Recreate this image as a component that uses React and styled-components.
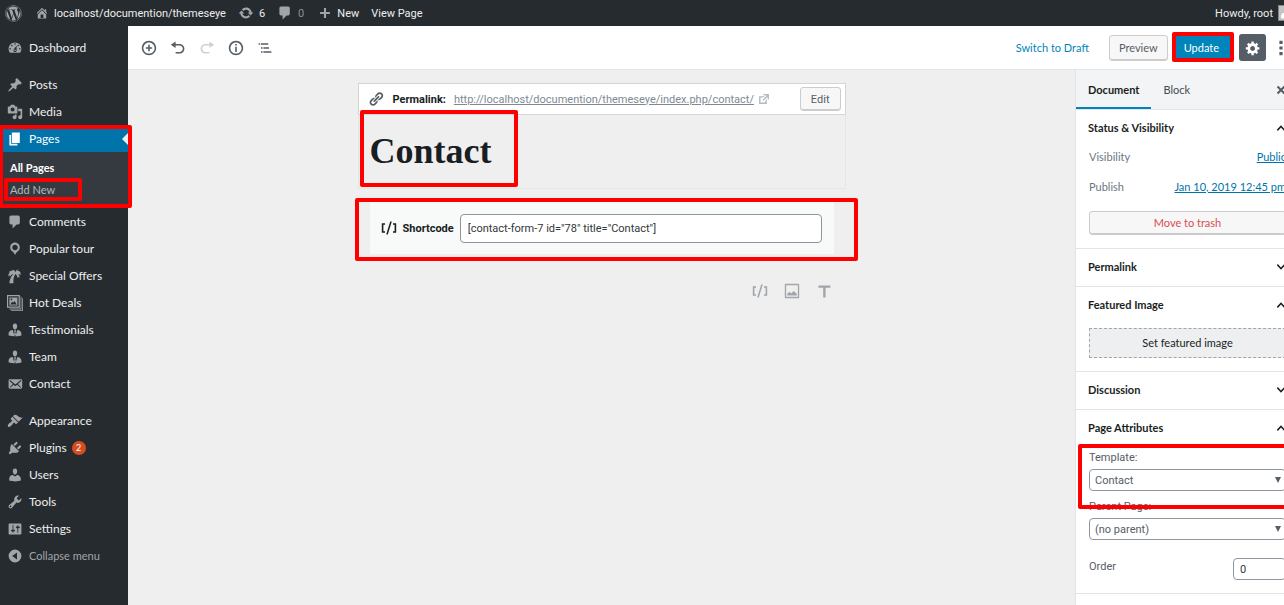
import React from "react";
import styled, { createGlobalStyle, css } from "styled-components";
import { FaWordpress } from "react-icons/fa";

const ui = `Lato, "Open Sans", sans-serif`;
const body = `Roboto, "Open Sans", sans-serif`;

const GlobalStyle = createGlobalStyle`
  * {
    box-sizing: border-box;
  }
  body {
    margin: 0;
    background: #efefef;
    color: #191e23;
    font-family: ${body};
    font-size: 11px;
  }
  button, input, select {
    font: inherit;
    color: inherit;
    margin: 0;
  }
  a {
    color: inherit;
    text-decoration: none;
  }
`;

const paths = {
  dashboard:
    "M3.76 16h12.48c1.1-1.37 1.76-3.11 1.76-5 0-4.42-3.58-8-8-8s-8 3.58-8 8c0 1.89.66 3.63 1.76 5zM10 4c.55 0 1 .45 1 1s-.45 1-1 1-1-.45-1-1 .45-1 1-1zM6 6c.55 0 1 .45 1 1s-.45 1-1 1-1-.45-1-1 .45-1 1-1zm8 0c.55 0 1 .45 1 1s-.45 1-1 1-1-.45-1-1 .45-1 1-1zm-5.37 5.55L12 7v6c0 1.1-.9 2-2 2s-2-.9-2-2c0-.57.24-1.08.63-1.45zM4 10c.55 0 1 .45 1 1s-.45 1-1 1-1-.45-1-1 .45-1 1-1zm12 0c.55 0 1 .45 1 1s-.45 1-1 1-1-.45-1-1 .45-1 1-1zm-5 3c0-.55-.45-1-1-1s-1 .45-1 1 .45 1 1 1 1-.45 1-1z",
  post: "M10.44 3.02l1.82-1.82 6.36 6.35-1.83 1.82c-1.05-.68-2.48-.57-3.41.36l-.75.75c-.92.93-1.04 2.35-.35 3.41l-1.83 1.82-2.41-2.41-2.8 2.79c-.42.42-3.38 2.71-3.8 2.29s1.86-3.39 2.28-3.81l2.79-2.79L4.1 9.36l1.83-1.82c1.05.69 2.48.57 3.4-.36l.75-.75c.93-.92 1.05-2.35.36-3.41z",
  media:
    "M13 11V4c0-.55-.45-1-1-1h-1.67L9 1H5L3.67 3H2c-.55 0-1 .45-1 1v7c0 .55.45 1 1 1h10c.55 0 1-.45 1-1zM7 4.5c1.38 0 2.5 1.12 2.5 2.5S8.38 9.5 7 9.5 4.5 8.38 4.5 7 5.62 4.5 7 4.5zM14 6h5v10.5c0 1.38-1.12 2.5-2.5 2.5S14 17.88 14 16.5s1.12-2.5 2.5-2.5c.17 0 .34.02.5.05V9h-3V6zm-4 8.05V13h2v3.5c0 1.38-1.12 2.5-2.5 2.5S7 17.88 7 16.5 8.12 14 9.5 14c.17 0 .34.02.5.05z",
  page: "M6 15V2h10v13H6zm-1 1h8v2H3V5h2v11z",
  comment:
    "M5 2h9c1.1 0 2 .9 2 2v7c0 1.1-.9 2-2 2h-2l-5 5v-5H5c-1.1 0-2-.9-2-2V4c0-1.1.9-2 2-2z",
  location:
    "M10 2C6.69 2 4 4.69 4 8c0 2.02 1.17 3.71 2.53 4.89.43.37 1.18.96 1.85 1.83.74.97 1.41 2.01 1.62 2.71.21-.7.88-1.74 1.62-2.71.67-.87 1.42-1.46 1.85-1.83C14.83 11.71 16 10.02 16 8c0-3.31-2.69-6-6-6zm0 2.56c1.9 0 3.44 1.54 3.44 3.44S11.9 11.44 10 11.44 6.56 9.9 6.56 8 8.1 4.56 10 4.56z",
  palm: "M10.6 5.6C10.3 3.6 8.6 2.1 6.3 2.3l1.2 1.3C5.300 3 3 3.800 2.200 5.600l1.900-.2C2.300 6.400 1.300 8.400 1.900 10.500l1.500-1.600-.1 2.300c1.200-2 3-3.500 5-4.100C5.500 9.700 3.300 13.500 2.900 19h5.200c-.5-4.200.4-8.300 2.300-11.400 1.600 1 2.700 2.900 2.900 5.200l1-1.900.9 2c.7-1.900.2-4-1.300-5.300l2 .2.2 1.800c1.200-1.400 1.300-3.100.3-4.600-1.100-1.300-2.800-1.700-4.400-1.200l2.300-1.600C13.100 1.500 11.100 3 10.600 5.600z",
  gallery:
    "M0 0h16v16H0V0zm1.500 1.500v13h13v-13h-13zM3 3h10v10H3V3zm1 9h8L9.500 7.500 8 9.500 6.500 8.500 4 12zM4.500 4.500v2h2v-2zM17 2h1v16H3v-1h14V2zm2 2h1v16H5v-1h14V4z",
  businessman:
    "M10 9.250c-2.270 0-2.730-3.440-2.730-3.440C7 4.020 7.820 2 9.970 2c2.160 0 2.980 2.020 2.710 3.810 0 0-.41 3.440-2.680 3.440zM7.200 10.100l2.200 7.900c-3.500 0-7.400-1-7.400-1v-2.500c0-2.200 1.900-4.300 5.200-4.400zm5.600 0c3.200.1 5.200 2.300 5.200 4.400V17s-3.900 1-7.400 1l2.200-7.900zM9.200 10.400h1.600l.5 1-.8 1.200.7 3.400-1.200 1.500L8.800 16l.7-3.400-.8-1.200z",
  email:
    "M19 14.500v-9c0-.83-.67-1.500-1.500-1.500H3.490c-.83 0-1.500.67-1.500 1.500v9c0 .83.67 1.500 1.500 1.500H17.500c.83 0 1.500-.67 1.500-1.500zm-1.310-9.110c.33.33.15.67-.03.84L13.600 9.950l3.900 4.060c.12.14.2.36.06.51-.13.16-.43.15-.56.05l-4.370-3.730-2.140 1.950-2.130-1.950-4.370 3.730c-.13.1-.43.11-.56-.05-.14-.15-.06-.37.06-.51l3.900-4.060-4.060-3.720c-.18-.17-.36-.51-.03-.84s.67-.17.95.07l6.240 5.040 6.250-5.040c.28-.24.62-.4.95-.07z",
  appearance:
    "M14.480 11.060L7.410 3.990l1.500-1.500c.5-.56 2.300-.47 3.510.32 1.210.8 1.430 1.280 2.910 2.100 1.180.64 2.450 1.260 4.450.85zm-.71.71L6.700 4.700 4.930 6.470c-.39.39-.39 1.020 0 1.410l1.060 1.060c.39.39.39 1.030 0 1.420-.6.6-1.430 1.110-2.210 1.690-.35.26-.7.53-1.010.84C1.430 14.230.4 16.080 1.400 17.070c.99 1 2.840-.03 4.180-1.360.31-.31.58-.66.85-1.020.57-.78 1.080-1.610 1.690-2.210.39-.39 1.020-.39 1.410 0l1.060 1.060c.39.39 1.020.39 1.410 0z",
  plugins:
    "M13.110 4.360L9.870 7.600 8 5.730l3.240-3.240c.35-.34 1.050-.2 1.560.32.52.51.66 1.210.31 1.550zm-8 1.770l.91-1.120 9.010 9.010-1.190.84c-.71.71-2.630 1.160-3.820 1.160H6.140L4.900 17.260c-.59.59-1.540.59-2.120 0-.59-.58-.59-1.530 0-2.120l1.240-1.240v-3.880c0-1.130.4-3.190 1.090-3.890zm7.260 3.970l3.240-3.240c.34-.35 1.040-.21 1.550.31.52.51.66 1.210.31 1.550l-3.240 3.250z",
  users:
    "M10 9.250c-2.270 0-2.730-3.440-2.730-3.440C7 4.020 7.820 2 9.970 2c2.160 0 2.980 2.020 2.710 3.810 0 0-.41 3.440-2.680 3.440zm0 2.570L12.720 10c2.390 0 4.520 2.330 4.520 4.530v2.490s-3.650 1.130-7.240 1.130c-3.650 0-7.240-1.130-7.240-1.130v-2.490c0-2.250 1.940-4.480 4.470-4.480z",
  tools:
    "M16.680 9.770c-1.340 1.340-3.300 1.670-4.950.99l-5.410 6.520c-.99.99-2.590.99-3.580 0s-.99-2.590 0-3.570l6.520-5.420c-.68-1.650-.35-3.610.99-4.950 1.280-1.280 3.120-1.620 4.720-1.060l-2.890 2.890 2.820 2.820 2.860-2.870c.53 1.580.18 3.390-1.080 4.650zM3.810 16.210c.4.39 1.040.39 1.430 0 .4-.4.4-1.040 0-1.430-.39-.4-1.030-.4-1.430 0-.39.39-.39 1.030 0 1.430z",
  settings:
    "M18 16V4c0-.55-.45-1-1-1H3c-.55 0-1 .45-1 1v12c0 .55.45 1 1 1h14c.55 0 1-.45 1-1zM8 11h1c.55 0 1 .45 1 1s-.45 1-1 1H8v1.500c0 .28-.22.5-.5.5s-.5-.22-.5-.5V13H6c-.55 0-1-.45-1-1s.45-1 1-1h1V5.500c0-.28.22-.5.5-.5s.5.22.5.5V11zm5-2h-1c-.55 0-1-.45-1-1s.45-1 1-1h1V5.500c0-.28.22-.5.5-.5s.5.22.5.5V7h1c.55 0 1 .45 1 1s-.45 1-1 1h-1v5.500c0 .28-.22.5-.5.5s-.5-.22-.5-.5V9z",
  collapse:
    "M10 2a8 8 0 1 0 0 16a8 8 0 0 0 0-16zM12.500 5.500v9L6.500 10z",
  home: "M16 8.500l1.530 1.530-1.060 1.060L10 4.600l-6.470 6.490-1.060-1.060L10 2.500l4 4v-2h2v4zm-6-2.460l6 5.990V18H4v-5.970zM12 17v-5H8v5h4z",
  update:
    "M10.200 3.280c3.530 0 6.430 2.610 6.920 6h2.080l-3.500 4-3.500-4h2.320c-.45-1.970-2.210-3.450-4.320-3.450-1.450 0-2.730.71-3.540 1.780L4.950 5.660C6.230 4.200 8.110 3.280 10.200 3.280zm-.4 13.440c-3.520 0-6.430-2.610-6.920-6H.8l3.500-4c1.170 1.330 2.330 2.670 3.500 4H5.480c.45 1.970 2.210 3.450 4.320 3.450 1.450 0 2.730-.71 3.540-1.780l1.710 1.950c-1.280 1.460-3.150 2.380-5.250 2.380z",
  plus: "M8.500 3h3v5.500H17v3h-5.500V17h-3v-5.500H3v-3h5.500z",
  insert:
    "M10 1c-5 0-9 4-9 9s4 9 9 9 9-4 9-9-4-9-9-9zm0 16c-3.900 0-7-3.100-7-7s3.100-7 7-7 7 3.100 7 7-3.100 7-7 7zm1-11H9v3H6v2h3v3h2v-3h3V9h-3V6z",
  undo: "M12 5H7V2L1 6l6 4V7h5c2.200 0 4 1.800 4 4s-1.800 4-4 4H7v2h5c3.300 0 6-2.700 6-6s-2.700-6-6-6z",
  redo: "M8 5h5V2l6 4-6 4V7H8c-2.200 0-4 1.800-4 4s1.800 4 4 4h5v2H8c-3.300 0-6-2.700-6-6s2.700-6 6-6z",
  info: "M10 1c-5 0-9 4-9 9s4 9 9 9 9-4 9-9-4-9-9-9zm0 16c-3.900 0-7-3.100-7-7s3.100-7 7-7 7 3.100 7 7-3.100 7-7 7zM9 5h2v2H9zM9 8.500h2V15H9z",
  outline: "M2 4h2v2H2zM5 4h9v2H5zM5 9h2v2H5zM8 9h7v2H8zM5 14h2v2H5zM8 14h10v2H8z",
  gear: "M18 12h-2.180c-.17.7-.44 1.350-.81 1.930l1.540 1.540-2.100 2.100-1.540-1.540c-.58.36-1.230.63-1.910.79V19H8v-2.180c-.68-.16-1.330-.43-1.910-.79l-1.540 1.540-2.120-2.120 1.540-1.540c-.36-.58-.63-1.230-.79-1.910H1V9.030h2.170c.16-.7.44-1.350.8-1.940L2.430 5.550l2.100-2.100 1.540 1.540c.58-.37 1.240-.64 1.930-.81V2h3v2.180c.68.16 1.330.43 1.910.79l1.540-1.540 2.120 2.120-1.540 1.540c.36.59.64 1.240.8 1.940H18V12zm-8.500 1.500c1.660 0 3-1.340 3-3s-1.340-3-3-3-3 1.340-3 3 1.340 3 3 3z",
  dots: "M8 1h4v4H8zM8 8h4v4H8zM8 15h4v4H8z",
  link: "M17.740 2.760c1.680 1.690 1.680 4.410 0 6.100l-1.530 1.520c-1.120 1.120-2.700 1.470-4.140 1.090l2.620-2.610.76-.77.76-.76c.84-.84.84-2.200 0-3.040-.84-.85-2.200-.85-3.040 0l-.77.76-3.380 3.380c-.37-1.440-.02-3.020 1.100-4.140l1.520-1.530c1.690-1.680 4.420-1.680 6.100 0zM8.590 13.430l5.340-5.340c.42-.42.42-1.100 0-1.520-.44-.43-1.130-.39-1.530 0l-5.330 5.340c-.42.42-.42 1.100 0 1.520.44.43 1.130.39 1.520 0zm-.76 2.290l4.140-4.150c.38 1.440.03 3.020-1.090 4.140l-1.520 1.530c-1.690 1.680-4.410 1.680-6.100 0-1.680-1.680-1.680-4.420 0-6.100l1.530-1.520c1.120-1.120 2.700-1.470 4.140-1.100l-4.140 4.150c-.85.84-.85 2.200 0 3.050.84.84 2.200.84 3.040 0z",
  external:
    "M9 3h8v8l-2-1V6.920l-5.600 5.590-1.410-1.410L14.080 5H10zm3 12v-3l2-2v7H3V6h8L9 8H5v7h7z",
  close: "M3 5.400L5.400 3 10 7.600 14.600 3 17 5.400 12.400 10l4.600 4.600-2.400 2.400-4.600-4.600L5.400 17 3 14.600 7.600 10z",
  up: "M3 13l7-7.500 7 7.500-1.800 1.800L10 9.200l-5.200 5.600z",
  down: "M3 7l7 7.500L17 7l-1.800-1.800L10 10.800 4.800 5.200z",
  shortcode: "M1 4h4v2H3v8h2v2H1zM11.500 2h2l-5 16h-2zM15 4h4v12h-4v-2h2V6h-2z",
  image:
    "M2 1h16c.6 0 1 .4 1 1v16c0 .6-.4 1-1 1H2c-.6 0-1-.4-1-1V2c0-.6.4-1 1-1zm.7 1.700v14.600h14.600V2.700zM4 15.500v-2l3-2.500 2 2 3-3 4 3.500v2z",
  text: "M3 3h15v3H12v12H9V6H3z",
};

const Svg = styled.svg`
  flex: none;
  display: block;
  fill: currentColor;
  fill-rule: evenodd;
`;

const Icon = ({ name, size = 16 }) => (
  <Svg width={size} height={size} viewBox="0 0 20 20" aria-hidden="true">
    <path d={paths[name]} />
  </Svg>
);

/* red marker frame, drawn over the part it points out */
const Marker = styled.span`
  position: absolute;
  z-index: 2;
  inset: ${(p) => p.$inset};
  border: 4px solid #f00;
  border-radius: 2px;
  pointer-events: none;
`;

const Clip = styled.div`
  overflow: hidden;
`;

/* the admin screen is a little wider than the window */
const Screen = styled.div`
  width: calc(100% + 15px);
  min-height: 100vh;
  display: flex;
  flex-direction: column;
`;

const AdminBar = styled.header`
  display: flex;
  align-items: center;
  height: 26px;
  padding: 0 5px;
  background: #262b30;
  color: #eee;
`;

const BarItem = styled.a`
  display: flex;
  align-items: center;
  gap: 5px;
  margin-right: ${(p) => p.$after || 12}px;
  color: ${(p) => (p.$muted ? "#8a8f94" : "#eee")};
  svg {
    color: #a0a5aa;
  }
`;

const Account = styled(BarItem)`
  margin: 0 0 0 auto;
`;

const Avatar = styled.span`
  display: flex;
  width: 16px;
  height: 16px;
  background: #c4c4c4;
  border: 1px solid #82878c;
  svg {
    color: #fff;
  }
`;

const Main = styled.div`
  flex: 1;
  display: flex;
`;

const Menu = styled.nav`
  flex: none;
  width: 128px;
  padding-top: 8px;
  background: #262b30;
  font-family: ${ui};
  font-size: 12px;
`;

const MenuLink = styled.a`
  position: relative;
  display: flex;
  align-items: center;
  gap: 6px;
  height: 27px;
  padding-left: 7px;
  margin-top: ${(p) => (p.$spaced ? 10 : 0)}px;
  color: ${(p) => (p.$current ? "#fff" : "#eee")};
  background: ${(p) => (p.$current ? "#0073aa" : "transparent")};
  svg {
    color: ${(p) => (p.$current ? "#fff" : "#a0a5aa")};
  }
  ${(p) =>
    p.$current &&
    css`
      &::after {
        content: "";
        position: absolute;
        right: 0;
        border: 6px solid transparent;
        border-right-color: #efefef;
        border-left: 0;
      }
    `}
`;

const CollapseButton = styled.button`
  display: flex;
  align-items: center;
  gap: 6px;
  height: 27px;
  padding: 0 0 0 7px;
  border: 0;
  background: none;
  color: #a0a5aa;
  font-size: 11px;
`;

const CurrentGroup = styled.div`
  position: relative;
`;

const SubMenu = styled.div`
  display: flex;
  flex-direction: column;
  padding: 5px 0 7px;
  background: #343a3f;
  font-size: 11px;
`;

const SubLink = styled.a`
  position: relative;
  padding-left: 10px;
  line-height: 22px;
  color: ${(p) => (p.$current ? "#fff" : "#b4b9be")};
  font-weight: ${(p) => (p.$current ? 700 : 400)};
`;

const Count = styled.span`
  display: grid;
  place-items: center;
  width: 14px;
  height: 14px;
  margin-left: -1px;
  border-radius: 50%;
  background: #d54e21;
  color: #fff;
  font-size: 9px;
`;

const Editor = styled.div`
  flex: 1;
  min-width: 0;
  display: flex;
  flex-direction: column;
`;

const Toolbar = styled.div`
  display: flex;
  align-items: center;
  height: 44px;
  padding: 0 10px 0 13px;
  background: #fff;
  border-bottom: 1px solid #e2e4e7;
  font-family: ${ui};
`;

const Tools = styled.div`
  display: flex;
  gap: 13px;
  margin-right: auto;
`;

const IconButton = styled.button`
  display: flex;
  padding: 0;
  border: 0;
  background: none;
  color: ${(p) => (p.disabled ? "#cfd1d4" : "#555d66")};
`;

const LinkButton = styled.button`
  padding: 0;
  margin-right: 20px;
  border: 0;
  background: none;
  color: #0085ba;
`;

const Button = styled.button`
  height: ${(p) => p.$height || 26}px;
  padding: 0 ${(p) => p.$pad || 9}px;
  border: 1px solid #ccc;
  border-radius: 3px;
  background: #f7f7f7;
  box-shadow: inset 0 -1px 0 #ccc;
  color: ${(p) => p.$color || "#555d66"};
`;

const UpdateWrap = styled.div`
  position: relative;
  margin: 0 8px 0 7px;
`;

const UpdateButton = styled.button`
  height: 26px;
  padding: 0 11px 0 8px;
  border: 1px solid #006a95;
  border-radius: 3px;
  background: #0085ba;
  color: #fff;
`;

const GearButton = styled.button`
  display: grid;
  place-items: center;
  width: 27px;
  height: 27px;
  margin-right: 7px;
  padding: 0;
  border: 0;
  border-radius: 3px;
  background: #555d66;
  color: #fff;
`;

const Columns = styled.div`
  flex: 1;
  display: flex;
`;

const Canvas = styled.main`
  flex: 1;
  display: flex;
  flex-direction: column;
  align-items: center;
  min-width: 0;
  padding: 13px 20px;
`;

const PostHead = styled.section`
  position: relative;
  width: 100%;
  max-width: 488px;
  border: 1px solid #e6e6e6;
`;

const Permalink = styled.div`
  display: flex;
  align-items: center;
  height: 32px;
  margin: -1px -1px 0;
  padding: 0 4px 0 9px;
  background: #fff;
  border: 1px solid #d5d5d5;
  white-space: nowrap;
  svg {
    color: #555d66;
  }
  strong {
    margin: 0 8px 0 9px;
  }
  a {
    margin-right: 3px;
    color: #7e8993;
    text-decoration: underline;
  }
  a + svg {
    color: #b4b9be;
  }
  button {
    margin-left: auto;
  }
`;

const Title = styled.h1`
  margin: 0;
  padding: 14px 11px 15px;
  font: 700 36px/44px "Liberation Serif", serif;
`;

const Shortcode = styled.section`
  position: relative;
  display: flex;
  align-items: center;
  width: 100%;
  max-width: 464px;
  height: 52px;
  margin-top: 13px;
  padding: 0 12px 0 11px;
  background: #f8f9f9;
  label {
    margin: 0 6px;
    font-weight: 700;
  }
`;

const ShortcodeInput = styled.input`
  flex: 1;
  min-width: 0;
  height: 29px;
  padding: 0 7px;
  border: 1px solid #8d96a0;
  border-radius: 4px;
  background: #fff;
  color: #32373c;
`;

const Appenders = styled.div`
  display: flex;
  justify-content: flex-end;
  gap: 16px;
  width: 100%;
  max-width: 464px;
  margin-top: 29px;
  padding-right: 2px;
  button {
    color: #a0a5aa;
  }
`;

const Sidebar = styled.aside`
  flex: none;
  width: 224px;
  background: #fff;
  border-left: 1px solid #e2e4e7;
  font-family: ${ui};
`;

const Tabs = styled.div`
  display: flex;
  height: 40px;
  padding-right: 12px;
  background: #f3f4f5;
  border-bottom: 1px solid #e2e4e7;
  > button:last-child {
    align-self: center;
    margin-left: auto;
  }
`;

const Tab = styled.button`
  padding: 0 12px;
  border: 0;
  border-bottom: 2px solid ${(p) => (p.$active ? "#0085ba" : "transparent")};
  border-top: 2px solid transparent;
  background: none;
  color: ${(p) => (p.$active ? "#191e23" : "#444b52")};
  font-weight: ${(p) => (p.$active ? 700 : 400)};
`;

const Panel = styled.section`
  border-bottom: 1px solid #e2e4e7;
`;

const PanelTitle = styled.button`
  display: flex;
  align-items: center;
  justify-content: space-between;
  width: 100%;
  height: 37px;
  padding: 0 12px 2px;
  border: 0;
  background: none;
  font-weight: 700;
`;

const PanelBody = styled.div`
  padding: ${(p) => p.$top || 0}px 13px 13px;
  button {
    width: 100%;
    padding-bottom: 2px;
  }
`;

const Row = styled.div`
  display: flex;
  align-items: center;
  justify-content: space-between;
  height: 20px;
  padding-bottom: 2px;
  margin-bottom: ${(p) => p.$after}px;
  color: #6c7781;
  a {
    color: #0073aa;
    text-decoration: underline;
  }
`;

const FeaturedButton = styled.button`
  height: 30px;
  border: 1px dashed #a0a5aa;
  background: #edeff0;
`;

const Field = styled.div`
  position: relative;
  margin-bottom: ${(p) => p.$after}px;
  font-family: ${body};
  color: #555d66;
  label {
    display: block;
    height: 19px;
    line-height: 16px;
  }
  &::after {
    content: "";
    position: absolute;
    right: 5px;
    bottom: 8px;
    border: 3px solid transparent;
    border-top: 6px solid #555d66;
    border-bottom: 0;
  }
`;

const Select = styled.select`
  appearance: none;
  display: block;
  width: 100%;
  height: 22px;
  padding: 0 5px;
  border: 1px solid #8d96a0;
  border-radius: 4px;
  background: #fff;
`;

const OrderRow = styled.div`
  display: flex;
  justify-content: space-between;
  font-family: ${body};
  color: #555d66;
  line-height: 18px;
  input {
    width: 53px;
    height: 22px;
    padding: 0 6px;
    border: 1px solid #8d96a0;
    border-radius: 4px;
    color: #32373c;
  }
`;

const upperMenu = [
  { icon: "dashboard", label: "Dashboard" },
  { icon: "post", label: "Posts", spaced: true },
  { icon: "media", label: "Media" },
];

const lowerMenu = [
  { icon: "comment", label: "Comments" },
  { icon: "location", label: "Popular tour" },
  { icon: "palm", label: "Special Offers" },
  { icon: "gallery", label: "Hot Deals" },
  { icon: "businessman", label: "Testimonials" },
  { icon: "businessman", label: "Team" },
  { icon: "email", label: "Contact" },
  { icon: "appearance", label: "Appearance", spaced: true },
  { icon: "plugins", label: "Plugins", count: 2 },
  { icon: "users", label: "Users" },
  { icon: "tools", label: "Tools" },
  { icon: "settings", label: "Settings" },
];

const MenuItem = ({ item }) => (
  <MenuLink href="#" $spaced={item.spaced}>
    <Icon name={item.icon} />
    {item.label}
    {item.count && <Count>{item.count}</Count>}
  </MenuLink>
);

const TopBar = () => (
  <AdminBar>
    <BarItem href="#" aria-label="About WordPress" $after={13}>
      <FaWordpress size={17} />
    </BarItem>
    <BarItem href="#">
      <Icon name="home" size={14} />
      localhost/documention/themeseye
    </BarItem>
    <BarItem href="#">
      <Icon name="update" />
      6
    </BarItem>
    <BarItem href="#" $muted $after={14}>
      <Icon name="comment" />
      0
    </BarItem>
    <BarItem href="#">
      <Icon name="plus" size={14} />
      New
    </BarItem>
    <BarItem href="#">View Page</BarItem>
    <Account href="#">
      Howdy, root
      <Avatar>
        <Icon name="users" size={14} />
      </Avatar>
    </Account>
  </AdminBar>
);

const AdminMenu = () => (
  <Menu>
    {upperMenu.map((item) => (
      <MenuItem key={item.label} item={item} />
    ))}
    <CurrentGroup>
      <MenuLink href="#" $current>
        <Icon name="page" />
        Pages
      </MenuLink>
      <SubMenu>
        <SubLink href="#" $current>
          All Pages
        </SubLink>
        <SubLink href="#">
          Add New
          <Marker $inset="-1px 46px 0 4px" />
        </SubLink>
      </SubMenu>
      <Marker $inset="0 -4px 0 -1px" />
    </CurrentGroup>
    {lowerMenu.map((item) => (
      <MenuItem key={item.label} item={item} />
    ))}
    <CollapseButton>
      <Icon name="collapse" />
      Collapse menu
    </CollapseButton>
  </Menu>
);

const EditorToolbar = () => (
  <Toolbar>
    <Tools>
      <IconButton aria-label="Add block">
        <Icon name="insert" />
      </IconButton>
      <IconButton aria-label="Undo">
        <Icon name="undo" />
      </IconButton>
      <IconButton aria-label="Redo" disabled>
        <Icon name="redo" />
      </IconButton>
      <IconButton aria-label="Content structure">
        <Icon name="info" />
      </IconButton>
      <IconButton aria-label="Block navigation">
        <Icon name="outline" />
      </IconButton>
    </Tools>
    <LinkButton>Switch to Draft</LinkButton>
    <Button>Preview</Button>
    <UpdateWrap>
      <UpdateButton>Update</UpdateButton>
      <Marker $inset="-3px -3px -1px" />
    </UpdateWrap>
    <GearButton aria-label="Settings">
      <Icon name="gear" />
    </GearButton>
    <IconButton aria-label="More options">
      <Icon name="dots" />
    </IconButton>
  </Toolbar>
);

const Content = () => (
  <Canvas>
    <PostHead>
      <Permalink>
        <Icon name="link" />
        <strong>Permalink:</strong>
        <a href="#">http://localhost/documention/themeseye/index.php/contact/</a>
        <Icon name="external" size={14} />
        <Button $height={24} $pad={10}>
          Edit
        </Button>
      </Permalink>
      <Title>Contact</Title>
      <Marker $inset="26px 327px 1px 1px" />
    </PostHead>
    <Shortcode>
      <Icon name="shortcode" />
      <label htmlFor="shortcode">Shortcode</label>
      <ShortcodeInput
        id="shortcode"
        defaultValue={'[contact-form-7 id="78" title="Contact"]'}
      />
      <Marker $inset="-4px -24px -7px -15px" />
    </Shortcode>
    <Appenders>
      <IconButton aria-label="Add shortcode">
        <Icon name="shortcode" />
      </IconButton>
      <IconButton aria-label="Add image">
        <Icon name="image" />
      </IconButton>
      <IconButton aria-label="Add text">
        <Icon name="text" />
      </IconButton>
    </Appenders>
  </Canvas>
);

const Section = ({ title, open, top, children }) => (
  <Panel>
    <PanelTitle aria-expanded={!!open}>
      {title}
      <Icon name={open ? "up" : "down"} size={12} />
    </PanelTitle>
    {open && <PanelBody $top={top}>{children}</PanelBody>}
  </Panel>
);

const Settings = () => (
  <Sidebar>
    <Tabs>
      <Tab $active>Document</Tab>
      <Tab>Block</Tab>
      <IconButton aria-label="Close settings">
        <Icon name="close" size={12} />
      </IconButton>
    </Tabs>
    <Section title="Status & Visibility" open>
      <Row $after={10}>
        Visibility <a href="#">Public</a>
      </Row>
      <Row $after={14}>
        Publish <a href="#">Jan 10, 2019 12:45 pm</a>
      </Row>
      <Button $height={24} $color="#d94f4f">
        Move to trash
      </Button>
    </Section>
    <Section title="Permalink" />
    <Section title="Featured Image" open top={4}>
      <FeaturedButton>Set featured image</FeaturedButton>
    </Section>
    <Section title="Discussion" />
    <Section title="Page Attributes" open top={3}>
      <Field $after={8}>
        <label htmlFor="template">Template:</label>
        <Select id="template">
          <option>Contact</option>
        </Select>
        <Marker $inset="-6px -13px -18px -11px" />
      </Field>
      <Field $after={18}>
        <label htmlFor="parent">Parent Page:</label>
        <Select id="parent">
          <option>(no parent)</option>
        </Select>
      </Field>
      <OrderRow>
        <label htmlFor="order">Order</label>
        <input id="order" type="text" defaultValue="0" />
      </OrderRow>
    </Section>
  </Sidebar>
);

const App = () => (
  <Clip>
    <GlobalStyle />
    <Screen>
      <TopBar />
      <Main>
        <AdminMenu />
        <Editor>
          <EditorToolbar />
          <Columns>
            <Content />
            <Settings />
          </Columns>
        </Editor>
      </Main>
    </Screen>
  </Clip>
);

export default App;
